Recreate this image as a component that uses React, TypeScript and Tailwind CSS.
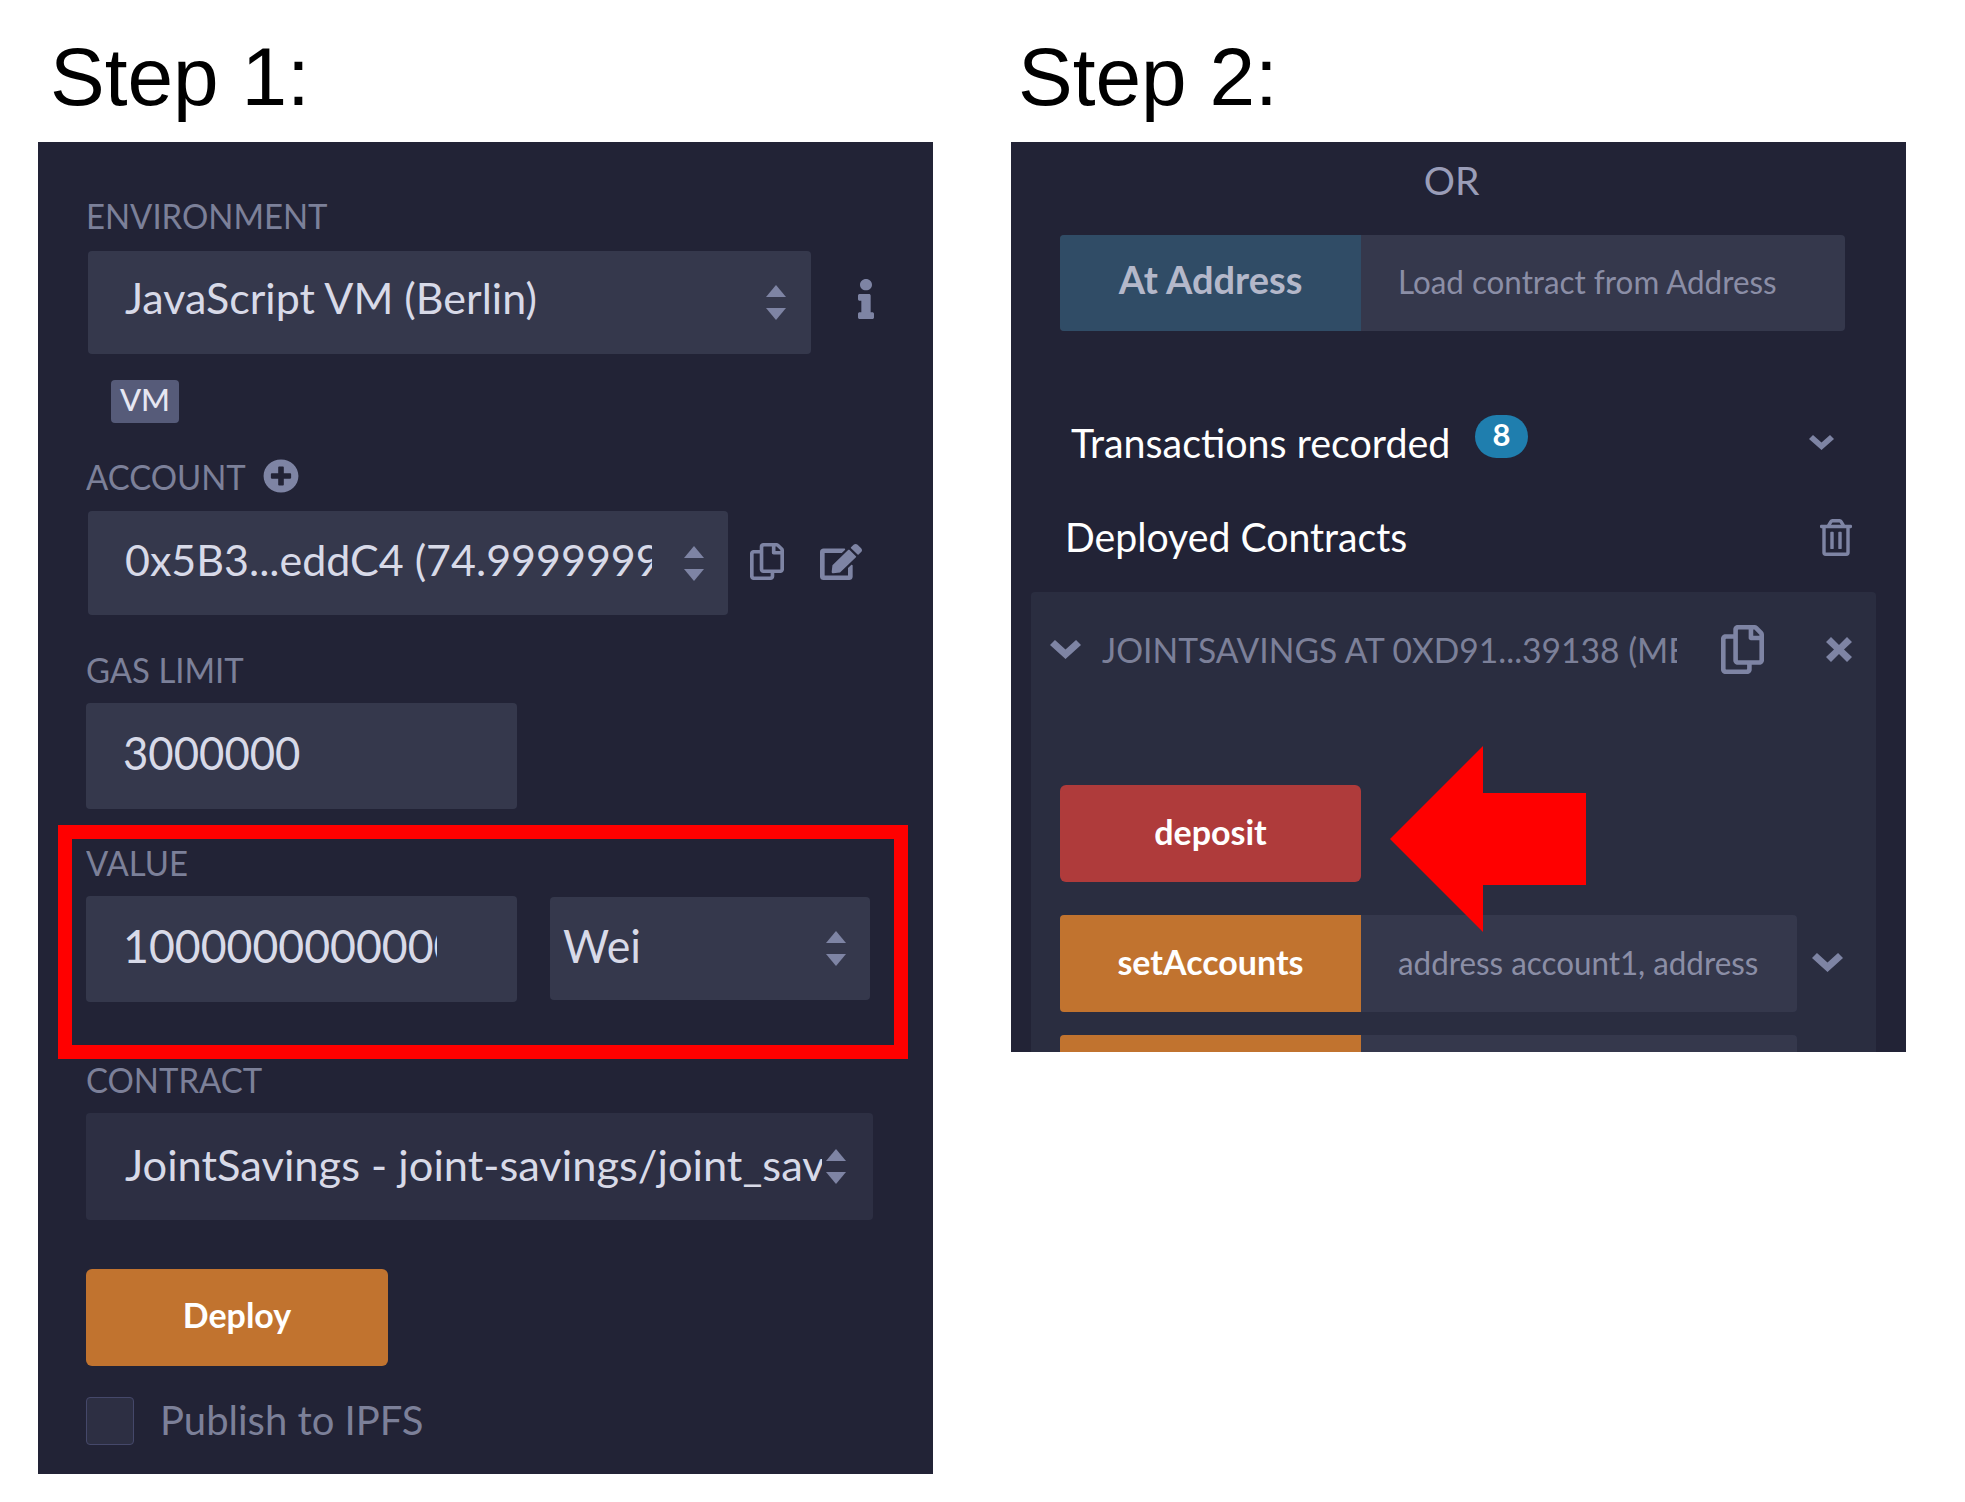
import type { ReactNode } from 'react'
import clsx from 'clsx'
import { FaEdit, FaInfo, FaPlusCircle, FaRegCopy, FaRegTrashAlt } from 'react-icons/fa'

const font = "font-['Lato','Noto_Sans',sans-serif]"

const T = ({ children, className, center }: { children: ReactNode; className?: string; center?: boolean }) => (
  <span className={clsx('inline-block whitespace-nowrap', center ? 'origin-center' : 'origin-left', className)}>
    {children}
  </span>
)

const Label = ({ children, className }: { children: ReactNode; className?: string }) => (
  <div className={clsx('h-[34px] flex items-center text-[35px] text-[#7c8099]', className)}>
    <T className="scale-x-[0.94]">{children}</T>
  </div>
)

const Updown = ({ className }: { className?: string }) => (
  <svg viewBox="0 0 20 35" preserveAspectRatio="none" className={clsx('w-[20px] h-[35px] shrink-0', className)} fill="#7e84a4">
    <path d="M10 0 L20 12 H0 Z" />
    <path d="M0 23 H20 L10 35 Z" />
  </svg>
)

const Chevron = ({ className }: { className?: string }) => (
  <svg viewBox="0 0 25 15" preserveAspectRatio="none" className={clsx('shrink-0', className)} fill="#7e84a4">
    <path d="M0 4 L4 0 L12.5 7.5 L21 0 L25 4 L12.5 15 Z" />
  </svg>
)

const Cross = ({ className }: { className?: string }) => (
  <svg viewBox="0 0 26 25" preserveAspectRatio="none" className={clsx('shrink-0', className)} fill="#7e84a4">
    <path d="M5 0 L13 8 L21 0 L26 5 L18 12.5 L26 20 L21 25 L13 17 L5 25 L0 20 L8 12.5 L0 5 Z" />
  </svg>
)

const Box = ({ children, className }: { children: ReactNode; className?: string }) => (
  <div className={clsx('bg-[#35384c] rounded-[4px] flex items-center overflow-hidden', className)}>{children}</div>
)

const Action = ({ label, color, className }: { label: string; color: string; className?: string }) => (
  <div className={clsx('w-[301px] h-[97px] shrink-0 flex items-center justify-center', color, className)}>
    <T center className="text-[34px] font-bold text-white mb-[4px]">{label}</T>
  </div>
)

const StepOne = () => (
  <div className="w-[895px] h-[1332px] bg-[#222336] pl-[48px] overflow-hidden">
    <Label className="mt-[56px]">ENVIRONMENT</Label>
    <div className="flex items-center mt-[19px] ml-[2px]">
      <Box className="w-[723px] h-[103px] pl-[37px] pr-[25px] justify-between">
        <T className="text-[43px] text-[#d8dae8] mb-[8px]">JavaScript VM (Berlin)</T>
        <Updown />
      </Box>
      <FaInfo color="#7e84a4" preserveAspectRatio="none" className="w-[16px] h-[40px] ml-[47px] mb-[8px]" />
    </div>
    <div className="w-[68px] h-[43px] ml-[25px] mt-[26px] bg-[#565b79] rounded-[4px] flex items-center justify-center">
      <T center className="text-[31px] font-medium text-[#e6e7f2] mb-[4px]">VM</T>
    </div>
    <div className="flex items-center mt-[36px]">
      <Label className="w-[177px] mb-[1px]">ACCOUNT</Label>
      <FaPlusCircle color="#7e84a4" preserveAspectRatio="none" className="w-[36px] h-[34px] mb-[1px]" />
    </div>
    <div className="flex items-center mt-[17px] ml-[2px]">
      <Box className="w-[640px] h-[104px] pl-[37px] pr-[12px]">
        <div className="w-[527px] overflow-hidden">
          <T className="text-[43px] text-[#d8dae8] mb-[6px]">0x5B3...eddC4 (74.999999999999)</T>
        </div>
        <Updown className="ml-[32px]" />
      </Box>
      <FaRegCopy color="#7e84a4" preserveAspectRatio="none" className="w-[34px] h-[37px] ml-[22px] mb-[3px]" />
      <FaEdit color="#7e84a4" preserveAspectRatio="none" className="w-[42px] h-[36px] ml-[36px] mb-[3px]" />
    </div>
    <Label className="mt-[37px]">GAS LIMIT</Label>
    <Box className="w-[431px] h-[106px] mt-[17px] pl-[37px]">
      <T className="text-[46px] text-[#d8dae8] mb-[8px] scale-x-[0.95]">3000000</T>
    </Box>
    <Label className="mt-[36px]">VALUE</Label>
    <div className="flex items-start mt-[17px]">
      <Box className="w-[431px] h-[106px] pl-[37px]">
        <div className="w-[314px] overflow-hidden">
          <T className="text-[46px] text-[#d8dae8] mb-[8px] scale-x-[0.97]">1000000000000000000</T>
        </div>
      </Box>
      <Box className="w-[320px] h-[103px] mt-[1px] ml-[33px] pl-[13px] pr-[24px] justify-between">
        <T className="text-[46px] text-[#d8dae8] mb-[6px] scale-x-[0.97]">Wei</T>
        <Updown />
      </Box>
    </div>
    <Label className="mt-[60px]">CONTRACT</Label>
    <div className="w-[787px] h-[107px] mt-[17px] pl-[39px] pr-[27px] bg-[#2d2f43] rounded-[4px] flex items-center justify-between overflow-hidden">
      <div className="w-[697px] overflow-hidden">
        <T className="text-[43px] text-[#d8dae8] mb-[2px] scale-x-[1.01]">JointSavings - joint-savings/joint_savings.sol</T>
      </div>
      <Updown />
    </div>
    <Action label="Deploy" color="bg-[#c1732f] rounded-[6px] pb-[2px]" className="w-[302px] mt-[49px]" />
    <div className="flex items-center mt-[24px]">
      <div className="w-[48px] h-[48px] rounded-[4px] bg-[#2d2f43] border border-[#45486a]" />
      <T className="ml-[26px] text-[40px] text-[#7c8099] mb-[2px]">Publish to IPFS</T>
    </div>
  </div>
)

const StepTwo = () => (
  <div className="w-[895px] h-[910px] bg-[#222336] overflow-hidden">
    <div className="h-[65px] pt-[12px] pr-[14px] flex items-center justify-center">
      <T center className="text-[39px] text-[#9a9db8]">OR</T>
    </div>
    <Box className="w-[785px] h-[96px] ml-[49px] mt-[28px] items-stretch">
      <div className="w-[301px] bg-[#304c66] flex items-center justify-center">
        <T center className="text-[38px] font-bold text-[#b4b8ca] mb-[7px]">At Address</T>
      </div>
      <div className="flex items-center pl-[37px]">
        <T className="text-[33px] text-[#8b8ea6] mb-[2px] scale-x-[0.95]">Load contract from Address</T>
      </div>
    </Box>
    <div className="flex items-start h-[60px] mt-[85px] pl-[60px] pr-[72px]">
      <T className="text-[40px] text-white mt-[-3px] w-[404px] scale-x-[0.985]">Transactions recorded</T>
      <div className="w-[53px] h-[43px] rounded-full bg-[#1f7eae] flex items-center justify-center mt-[-1px]">
        <T center className="text-[31px] font-bold text-white mb-[4px]">8</T>
      </div>
      <Chevron className="w-[25px] h-[15px] ml-auto mt-[19px]" />
    </div>
    <div className="flex items-center h-[46px] mt-[38px] pl-[54px] pr-[54px]">
      <T className="text-[40px] text-white scale-x-[0.98]">Deployed Contracts</T>
      <FaRegTrashAlt color="#7e84a4" preserveAspectRatio="none" className="w-[32px] h-[37px] ml-auto" />
    </div>
    <div className="w-[845px] h-[500px] ml-[20px] mt-[32px] bg-[#2a2d40] rounded-[4px] pl-[19px] pt-[33px]">
      <div className="flex items-center h-[49px]">
        <Chevron className="w-[31px] h-[19px]" />
        <div className="w-[575px] ml-[21px] overflow-hidden">
          <T className="text-[35px] text-[#7c8099] scale-x-[0.96]">JOINTSAVINGS AT 0XD91...39138 (MEMORY)</T>
        </div>
        <FaRegCopy color="#7e84a4" preserveAspectRatio="none" className="w-[43px] h-[49px] ml-[44px]" />
        <Cross className="w-[26px] h-[25px] ml-[62px]" />
      </div>
      <Action label="deposit" color="bg-[#af3b3b] rounded-[6px]" className="ml-[10px] mt-[111px]" />
      <div className="flex items-center ml-[10px] mt-[33px]">
        <Box className="w-[737px] h-[97px]">
          <Action label="setAccounts" color="bg-[#c1732f]" />
          <T className="ml-[37px] text-[33px] text-[#8b8ea6] scale-x-[0.95] mb-[2px]">address account1, address</T>
        </Box>
        <Chevron className="w-[31px] h-[19px] ml-[15px] mb-[3px]" />
      </div>
      <Box className="w-[737px] h-[97px] ml-[10px] mt-[23px] items-stretch">
        <div className="w-[301px] bg-[#c1732f]" />
      </Box>
    </div>
  </div>
)

export default function App() {
  return (
    <div className={clsx('relative w-[1965px] h-[1502px] bg-white overflow-hidden', font)}>
      <div className="flex h-[142px] pl-[50px] font-['Liberation_Sans',Arial,sans-serif] text-[82px] text-black leading-none">
        <div className="w-[968px] pt-[36px]">Step 1:</div>
        <div className="pt-[36px]">Step 2:</div>
      </div>
      <div className="flex items-start pl-[38px] gap-[78px]">
        <StepOne />
        <StepTwo />
      </div>

      {/* annotations drawn over the screenshots */}
      <div className="absolute left-[58px] top-[825px] w-[850px] h-[234px] border-[14px] border-[#ff0000]" />
      <svg className="absolute left-[1390px] top-[746px] w-[196px] h-[186px]" viewBox="0 0 196 186" fill="#ff0000">
        <path d="M0 93 L93 0 V47 H196 V139 H93 V186 Z" />
      </svg>
    </div>
  )
}
